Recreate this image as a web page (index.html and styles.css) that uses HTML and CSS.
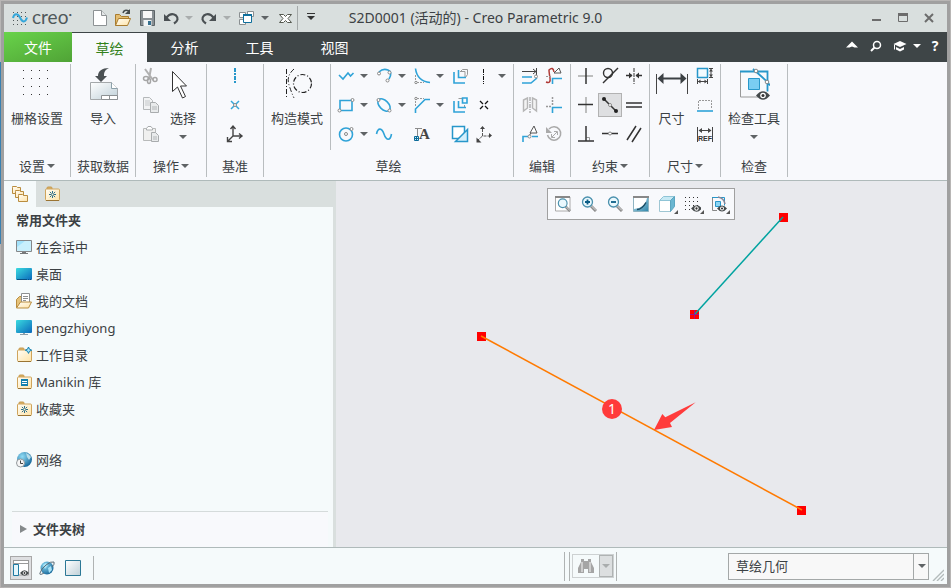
FILE: index.html
```html
<!DOCTYPE html>
<html lang="zh-CN">
<head>
  <meta charset="utf-8">
  <title>S2D0001 (活动的) - Creo Parametric 9.0</title>

  <link rel="stylesheet" href="styles.css">
</head>
<body>

  <svg class="defs" width="0" height="0" aria-hidden="true">
    <defs>
      <linearGradient id="screen" x1="0" y1="0" x2="1" y2="1">
        <stop offset="0" stop-color="#3adbe0"/>
        <stop offset="1" stop-color="#0a68bb"/>
      </linearGradient>
      <linearGradient id="folder" x1="0" y1="0" x2="1" y2="1">
        <stop offset="0" stop-color="#fffdf6"/>
        <stop offset="1" stop-color="#ffe4a8"/>
      </linearGradient>
      <linearGradient id="steel" x1="0" y1="0" x2="1" y2="1">
        <stop offset="0" stop-color="#ffffff"/>
        <stop offset="1" stop-color="#bfd0d8"/>
      </linearGradient>
      <linearGradient id="redraw" x1="0" y1="0" x2="1" y2="1">
        <stop offset="0" stop-color="#bfe4f0"/>
        <stop offset="1" stop-color="#2f86ab"/>
      </linearGradient>
      <radialGradient id="globe" cx=".35" cy=".3" r=".8">
        <stop offset="0" stop-color="#8fdcf5"/>
        <stop offset="1" stop-color="#0c5d92"/>
      </radialGradient>
    </defs>
    <symbol id="eye" viewBox="0 0 14 9">
      <path d="M0 4.5Q7-4 14 4.500Q7 13 0 4.500z" fill="#44494b"/>
      <circle cx="7" cy="4.500" r="2.800" fill="#fff"/>
      <circle cx="7" cy="4.500" r="1.500" fill="#333"/>
    </symbol>
    <symbol id="lens" viewBox="0 0 16 16">
      <path d="M10 10l5 5" stroke="#8c8c8c" stroke-width="3"/>
      <path d="M10.500 10l4.500 4.500" stroke="#dcdcdc" stroke-width="1"/>
      <circle cx="6.500" cy="6" r="5" fill="#eaf8fd" stroke="#4a90ad" stroke-width="1.300"/>
    </symbol>
    <symbol id="folder-shape" viewBox="0 0 16 16">
      <path d="M3 3.500V2q0-1 1-1h3q1 0 1 1v1.500z" fill="#d7b062" stroke="#c79a50"/>
      <rect x="1.500" y="3" width="14" height="11.500" rx="1" fill="url(#folder)" stroke="#cfa45c"/>
      <path d="M2 14.500h13" stroke="#9a7433"/>
    </symbol>
    <symbol id="star" viewBox="0 0 8 8">
      <path d="M4 0v3M4 5v3M0 4h3M5 4h3M1 1l2 2M5 5l2 2M7 1L5 3M3 5L1 7" stroke="#0a5a80" stroke-width="1"/>
    </symbol>
  </svg>

  <div class="window">

    <header class="titlebar">
      <div class="quick">
        <div class="brand">
          <svg width="16" height="14" viewBox="0 0 16 14">
            <path d="M1 1.500h14M1 5.500h14M1 9.500h14M1 13.500h14" stroke="#50585a" stroke-dasharray="1 3"/>
            <path d="M1 7C2 2 6 2 8 6.500s5 6 7 0" fill="none" stroke="#35a7da" stroke-width="2"/>
          </svg>
          <span>creo<sup>•</sup></span>
        </div>
        <button class="tool" aria-label="新建">
          <svg width="24" height="24"><path d="M6.500 4.500h8l5 5v10h-13z" fill="#fff" stroke="#8d9294"/><path d="M14.500 4.500v5h5" fill="#e4e7e8" stroke="#8d9294"/></svg>
        </button>
        <button class="tool" aria-label="打开">
          <svg width="24" height="24"><path d="M4.500 19.500v-11h4l2 2h7v2" fill="#e3bd71" stroke="#a97c2f"/><path d="M4.500 19.500l3-7h12l-3 7z" fill="url(#folder)" stroke="#a97c2f"/><path d="M12 7q1-4 6-2" fill="none" stroke="#454b4d" stroke-width="1.500"/><path d="M19 3v5h-5z" fill="#454b4d"/></svg>
        </button>
        <button class="tool" aria-label="保存">
          <svg width="24" height="24"><path d="M5.500 4.500h14v15h-14z" fill="#899094" stroke="#5d6568"/><path d="M8 5h9v7H8z" fill="#f7f7f7"/><path d="M8.500 14h8v6h-8z" fill="#f1f4f5"/><path d="M13 15h3v4h-3z" fill="#36708e"/></svg>
        </button>
        <div class="split">
          <button class="tool" aria-label="撤消">
            <svg width="24" height="24"><path d="M7 12Q12 6 17 9.500q4 4-2 8" fill="none" stroke="#4a5053" stroke-width="2.200"/><path d="M5 8v7h7z" fill="#4a5053"/></svg>
          </button>
          <button class="drop" aria-label="撤消列表"><i class="caret pale"></i></button>
        </div>
        <div class="split">
          <button class="tool" aria-label="重做">
            <svg width="24" height="24"><path d="M17 12Q12 6 7 9.500q-4 4 2 8" fill="none" stroke="#4a5053" stroke-width="2.200"/><path d="M19 8v7h-7z" fill="#4a5053"/></svg>
          </button>
          <button class="drop" aria-label="重做列表"><i class="caret pale"></i></button>
        </div>
        <div class="split">
          <button class="tool" aria-label="窗口">
            <svg width="24" height="24"><path d="M4.500 6.500h6v5h-6zM12.500 5.500h6v5h-6zM4.500 13.500h6v5h-6z" fill="#fff" stroke="#8a8f91"/><path d="M8.500 8.500h8v8h-8z" fill="#fff" stroke="#0f6f9c"/><path d="M8 9h9" stroke="#0f6f9c" stroke-width="2"/></svg>
          </button>
          <button class="drop" aria-label="窗口列表"><i class="caret"></i></button>
        </div>
        <button class="tool" aria-label="关闭窗口">
          <svg width="24" height="24"><path d="M6.500 8.500h4l2 2 2-2h4l-3.500 4 3.500 4h-4l-2-2-2 2h-4l3.500-4z" fill="#fff" stroke="#54584f"/></svg>
        </button>
        <button class="more" aria-label="自定义快速访问工具栏"><i class="caret dark"></i></button>
      </div>
      <h1>S2D0001 (活动的) - Creo Parametric 9.0</h1>
      <div class="controls">
        <button aria-label="最小化"><svg width="12" height="12"><path d="M1 8h9" stroke="#6c6c6c" stroke-width="2"/></svg></button>
        <button aria-label="最大化"><svg width="12" height="12"><path d="M1.500 2v7.500h9V2z" fill="none" stroke="#6c6c6c"/><path d="M1 2.500h10" stroke="#6c6c6c" stroke-width="3"/></svg></button>
        <button aria-label="关闭"><svg width="12" height="12"><path d="M2 2l8 8M10 2l-8 8" stroke="#6c6c6c" stroke-width="2"/></svg></button>
      </div>
    </header>

    <nav class="tabs">
      <button class="file">文件</button>
      <button class="active">草绘</button>
      <button>分析</button>
      <button>工具</button>
      <button>视图</button>
      <div class="help">
        <button aria-label="最小化功能区"><svg width="14" height="14"><path d="M1 8.500L7 2.500l6 6H9.500L7 7.500 4.500 8.500z" fill="#fff"/></svg></button>
        <button aria-label="搜索"><svg width="14" height="14"><circle cx="8" cy="6" r="3.500" fill="none" stroke="#fff" stroke-width="1.500"/><path d="M5.500 8.500L2 12" stroke="#fff" stroke-width="2"/></svg></button>
        <button aria-label="学习"><svg width="14" height="14"><path d="M7 2l6.500 3L7 8 .5 5zM3 8l4 2 4-2v2.500l-4 2-4-2z" fill="#fff"/><path d="M1.500 5.500v5" stroke="#fff"/></svg></button>
        <button class="drop" aria-label="学习列表"><i class="caret white"></i></button>
        <button class="question" aria-label="帮助">?</button>
      </div>
    </nav>

    <section class="ribbon">

      <div class="group setup">
        <div class="body">
          <button class="big">
            <svg width="32" height="32"><path d="M2 2.500h27M2 10.500h27M2 18.500h27M2 26.500h27" stroke="#333" stroke-dasharray="1 7"/></svg>
            <span>栅格设置</span>
          </button>
        </div>
        <button class="label">设置<i class="caret"></i></button>
      </div>

      <div class="group data">
        <div class="body">
          <button class="big">
            <svg width="32" height="32"><path d="M3.500 14.500h21l6 6v11h-27z" fill="url(#steel)" stroke="#a4a8aa"/><path d="M24.500 14.500v6h6" fill="#fff" stroke="#8ca0aa"/><path d="M14.500 31.500v-4h16v4zM22.500 27.500v4" fill="#fff" stroke="#8c9193"/><path d="M22 0C15 0 11 3 11 8H8l6 6 6-6h-3C17 4 18 2 22 0z" fill="#4b5154"/></svg>
            <span>导入</span>
          </button>
        </div>
        <div class="label">获取数据</div>
      </div>

      <div class="group edit-ops">
        <div class="body">
          <div class="icons">
            <button class="tool" aria-label="剪切" disabled><svg width="24" height="24"><path d="M6 5l8 11M12 4l-2 11" stroke="#b0b0b0" stroke-width="2"/><ellipse cx="7" cy="14.500" rx="2.500" ry="2" fill="none" stroke="#a6a6a6" stroke-width="1.500"/><ellipse cx="10" cy="17" rx="1.500" ry="2.500" fill="none" stroke="#a6a6a6" stroke-width="1.500"/><circle cx="16" cy="15.500" r="2" fill="none" stroke="#a6a6a6" stroke-width="1.500"/></svg></button>
            <button class="tool" aria-label="复制" disabled><svg width="24" height="24"><path d="M4.500 4.500h6l3 3v9h-9z" fill="#f2f3f4" stroke="#b5b8ba"/><path d="M6 8h5M6 10h5M6 12h5" stroke="#c5c8ca"/><path d="M11.500 9.500h5l3 3v7h-8z" fill="#e9ebec" stroke="#a9acae"/><path d="M13 14h5M13 16h5" stroke="#b3b6b8"/></svg></button>
            <button class="tool" aria-label="粘贴" disabled><svg width="24" height="24"><path d="M4.500 6.500h12v12h-12z" fill="#f0f0ef" stroke="#b8baba"/><path d="M7.500 8V6.500L9 4.500h3l1.500 2V8z" fill="#fff" stroke="#a9acae"/><path d="M12.500 10.500h4l3 3v6h-7z" fill="#e9ebec" stroke="#a9acae"/><path d="M14 15h4M14 17h4" stroke="#b3b6b8"/></svg></button>
          </div>
          <button class="big">
            <svg width="32" height="32"><path d="M5.500 3.500v20l5-4.500 5 11 3-1.500-5-10.500h6z" fill="#fff" stroke="#333"/></svg>
            <span>选择</span>
            <i class="caret"></i>
          </button>
        </div>
        <button class="label">操作<i class="caret"></i></button>
      </div>

      <div class="group datum">
        <div class="body">
          <div class="icons">
            <button class="tool" aria-label="中心线"><svg width="24" height="24"><path d="M12 4v16" stroke="#2797ca" stroke-width="2" stroke-dasharray="4 1 2 1"/></svg></button>
            <button class="tool" aria-label="点"><svg width="24" height="24"><path d="M8 8l8 8M16 8l-8 8" stroke="#35a7da" stroke-width="1.500"/><circle cx="12" cy="12" r="1.500" fill="#fff" stroke="#8a8a8a"/></svg></button>
            <button class="tool" aria-label="坐标系"><svg width="24" height="24"><path d="M10 5v9h8M10 14l-5 5M7.500 7L10 4l2.500 3M16 11.500l3 2.500-3 2.500M4.500 15v4.500H9" fill="none" stroke="#444" stroke-width="1.400"/></svg></button>
          </div>
        </div>
        <div class="label">基准</div>
      </div>

      <div class="group sketch">
        <div class="body">
          <button class="big construct">
            <svg width="32" height="32"><path d="M5.500 1v30" stroke="#222" stroke-dasharray="5 2 1 2"/><path d="M13 1q-8 7-5 16t5 13" fill="none" stroke="#222" stroke-dasharray="5 2 1 2"/><circle cx="21.500" cy="15.500" r="9" fill="none" stroke="#222" stroke-width="1.200" stroke-dasharray="5 2 1 2"/></svg>
            <span>构造模式</span>
          </button>
          <div class="sketch-grid">
            <div class="split">
              <button class="tool" aria-label="线"><svg width="24" height="24"><path d="M5 11l4 4 5-6 2.500 3L19.500 9" class="blue"/></svg></button>
              <button class="drop" aria-label="线类型"><i class="caret"></i></button>
            </div>
            <div class="split">
              <button class="tool" aria-label="弧"><svg width="24" height="24"><path d="M7 8Q11 4 16 6t1 9" class="blue"/><g class="knob"><circle cx="7" cy="9.500" r="1.500"/><circle cx="17.500" cy="8.500" r="1.500"/><circle cx="15.500" cy="16.500" r="1.500"/></g></svg></button>
              <button class="drop" aria-label="弧类型"><i class="caret"></i></button>
            </div>
            <div class="split">
              <button class="tool" aria-label="圆角"><svg width="24" height="24"><path d="M5.500 11v7.500H14" class="dash"/><path d="M5.500 4.500Q7 17 20 18.500" class="blue"/><g class="knob"><circle cx="6" cy="18.500" r="1.200"/></g></svg></button>
              <button class="drop" aria-label="圆角类型"><i class="caret"></i></button>
            </div>
            <button class="tool" aria-label="偏移"><svg width="24" height="24"><path d="M12 7.500h5v6M12.500 7.500l2-2h5v5l-2 3" fill="none" stroke="#999"/><path d="M6 8v11h11M10.500 6v7.500H18" class="blue"/></svg></button>
            <div class="split">
              <button class="tool" aria-label="构造中心线"><svg width="24" height="24"><path d="M11.500 5v15" stroke="#111" stroke-dasharray="4 1 1 1"/></svg></button>
              <button class="drop" aria-label="中心线类型"><i class="caret"></i></button>
            </div>

            <div class="split">
              <button class="tool" aria-label="矩形"><svg width="24" height="24"><path d="M6 7.500h12v10H6z" class="blue"/><g class="knob"><circle cx="18.500" cy="7" r="1.500"/><circle cx="5.500" cy="17.500" r="1.500"/></g></svg></button>
              <button class="drop" aria-label="矩形类型"><i class="caret"></i></button>
            </div>
            <div class="split">
              <button class="tool" aria-label="椭圆"><svg width="24" height="24"><ellipse cx="12" cy="12" rx="7.500" ry="4.500" transform="rotate(45 12 12)" class="blue"/><g class="knob"><circle cx="6.500" cy="7" r="1.500"/><circle cx="17.500" cy="17.500" r="1.500"/></g></svg></button>
              <button class="drop" aria-label="椭圆类型"><i class="caret"></i></button>
            </div>
            <div class="split">
              <button class="tool" aria-label="倒角"><svg width="24" height="24"><path d="M5.500 13V5.500H14" class="dash"/><path d="M5.500 20v-4L15 6.500h5" class="blue"/><g class="knob"><circle cx="6" cy="5.500" r="1.200"/></g></svg></button>
              <button class="drop" aria-label="倒角类型"><i class="caret"></i></button>
            </div>
            <button class="tool" aria-label="加厚"><svg width="24" height="24"><path d="M10.500 5.500h4M16.500 12v2" fill="none" stroke="#999"/><path d="M6 8v11h11M10.500 8v6.500H18M14.500 5v5H19V5z" class="blue"/></svg></button>
            <button class="tool" aria-label="构造点"><svg width="24" height="24"><path d="M8 8l3 3M16 8l-3 3M8 16l3-3M16 16l-3-3" stroke="#111" stroke-width="1.300"/></svg></button>

            <div class="split">
              <button class="tool" aria-label="圆"><svg width="24" height="24"><circle cx="12" cy="12.500" r="6.500" class="blue"/><g class="knob"><circle cx="12" cy="12" r="1.500"/><circle cx="17.500" cy="7" r="1.500"/></g></svg></button>
              <button class="drop" aria-label="圆类型"><i class="caret"></i></button>
            </div>
            <button class="tool" aria-label="样条"><svg width="24" height="24"><path d="M4.500 12C6 5 10 6 12 12s6 8 7.500 0" class="blue"/></svg></button>
            <button class="tool" aria-label="文本"><svg width="24" height="24"><path d="M5 6.500h7M7.500 6.500V14" stroke="#8b8b8b"/><text x="9" y="17" class="serif-a">A</text><path d="M4.500 14.500h4v4h-4zM6.500 14v5M4 16.500h5" fill="#c9effc" stroke="#0c6b99"/></svg></button>
            <button class="tool" aria-label="投影"><svg width="24" height="24"><path d="M4.500 4.500h12v12h-12z" fill="#fff" stroke="#2797ca" stroke-width="1.500"/><path d="M7.500 19.500l12-12v12z" fill="#d3effb" stroke="#2797ca" stroke-width="1.500"/></svg></button>
            <button class="tool" aria-label="构造坐标系"><svg width="24" height="24"><path d="M10.500 7v7H17M10.500 14L6 18" fill="none" stroke="#555" stroke-dasharray="3 1"/><path d="M8 7l2.500-3L13 7zM17 11v5l3-2.500zM4.500 15.500v5h5z" fill="#444"/></svg></button>
          </div>
        </div>
        <div class="label">草绘</div>
      </div>

      <div class="group edit">
        <div class="body">
          <div class="icons two">
            <button class="tool" aria-label="修改"><svg width="24" height="24"><path d="M4 7.500h14M18.500 4v7M15 5l3 2.500-3 2.500" fill="none" stroke="#444"/><path d="M4 13h10M4 19h9l6-5" class="blue"/><g class="knob"><circle cx="18" cy="12.500" r="1.500"/></g></svg></button>
            <button class="tool" aria-label="删除段"><svg width="24" height="24"><path d="M4 18q5 2 4-4t-1-8q4-4 5 2" fill="none" stroke="#b03a36" stroke-width="1.500"/><path d="M19 9l-2-5-5 5z" fill="#fff" stroke="#555"/><path d="M4 12.500h6" stroke="#999" stroke-dasharray="2 1"/><path d="M10.500 20v-5.500H20" class="blue"/></svg></button>
            <button class="tool" aria-label="镜像" disabled><svg width="24" height="24"><path d="M5.500 7v11l4-3V5zM18.500 7v11l-4-3V5z" fill="#f3f3f3" stroke="#b6b6b6" stroke-width="1.400"/><path d="M12 4v16" stroke="#8b8b8b" stroke-dasharray="4 1 1 1"/></svg></button>
            <button class="tool" aria-label="拐角"><svg width="24" height="24"><path d="M4 13.500h6M10.500 4v9" stroke="#999" stroke-width="1.500" stroke-dasharray="2 1"/><path d="M10.500 20v-5.500H20" class="blue"/></svg></button>
            <button class="tool" aria-label="分割"><svg width="24" height="24"><path d="M5 20v-5.500h5M14 14.500h6" class="blue"/><path d="M12 11l4-7 3 7zM11 14l2-3" fill="#fff" stroke="#555"/><g class="knob"><circle cx="11.500" cy="14.500" r="1.500"/></g></svg></button>
            <button class="tool" aria-label="旋转调整大小" disabled><svg width="24" height="24"><path d="M7 7A6.700 6.700 0 1 1 5.500 13" fill="none" stroke="#aaa" stroke-width="1.500"/><path d="M4 5v6h6z" fill="#aaa"/><path d="M10 15l5-5M12 9.500h3.500V13M9.500 12v3.500H13" fill="none" stroke="#aaa"/></svg></button>
          </div>
        </div>
        <div class="label">编辑</div>
      </div>

      <div class="group constrain">
        <div class="body">
          <div class="icons three">
            <button class="tool" aria-label="竖直"><svg width="24" height="24"><path d="M4 12h15" stroke="#aaa" stroke-width="1.500"/><path d="M12 4v16" stroke="#333" stroke-width="1.500"/></svg></button>
            <button class="tool" aria-label="相切"><svg width="24" height="24"><circle cx="10" cy="9" r="4.500" fill="none" stroke="#333" stroke-width="1.400"/><path d="M5 19L20 4" stroke="#333" stroke-width="1.400"/></svg></button>
            <button class="tool" aria-label="对称"><svg width="24" height="24"><path d="M12 4v16" stroke="#333" stroke-dasharray="4 1"/><path d="M4 11.500h6M20 11.500h-6" stroke="#333" stroke-width="1.400"/><path d="M7 8.500l3.500 3L7 14.500zM17 8.500l-3.500 3 3.500 3z" fill="#333"/></svg></button>
            <button class="tool" aria-label="水平"><svg width="24" height="24"><path d="M12 4v16" stroke="#aaa" stroke-width="1.500"/><path d="M4 11.500h15" stroke="#333" stroke-width="1.500"/></svg></button>
            <button class="tool pressed" aria-label="中点"><svg width="24" height="24"><path d="M6 6l12 12" stroke="#333" stroke-width="1.500"/><circle cx="6" cy="6" r="2" fill="#222"/><circle cx="18" cy="18" r="2" fill="#222"/><g class="knob"><circle cx="12" cy="12" r="1.500"/></g></svg></button>
            <button class="tool" aria-label="相等"><svg width="24" height="24"><path d="M4 10h16M4 14h16" stroke="#333" stroke-width="1.500"/></svg></button>
            <button class="tool" aria-label="垂直"><svg width="24" height="24"><path d="M12.500 15.500h3v3" fill="none" stroke="#999"/><path d="M12 4v15M4 19h16" stroke="#333" stroke-width="1.500"/></svg></button>
            <button class="tool" aria-label="重合"><svg width="24" height="24"><path d="M4 11.500h16" stroke="#333" stroke-width="1.500"/><g class="knob"><circle cx="12" cy="11.500" r="1.500"/></g></svg></button>
            <button class="tool" aria-label="平行"><svg width="24" height="24"><path d="M5 18L14 4M10 20L19 6" stroke="#333" stroke-width="1.500"/></svg></button>
          </div>
        </div>
        <button class="label">约束<i class="caret"></i></button>
      </div>

      <div class="group dimension">
        <div class="body">
          <button class="big">
            <svg width="32" height="32"><path d="M.5 6v20M31.500 6v20" stroke="#444"/><path d="M5 10.500h22" stroke="#3c4144" stroke-width="2"/><path d="M1.500 10.500l6-5.500v11zM30.500 10.500l-6-5.500v11z" fill="#3c4144"/></svg>
            <span>尺寸</span>
          </button>
          <div class="icons">
            <button class="tool" aria-label="周长"><svg width="24" height="24"><path d="M4.500 4.500h10v9h-10z" fill="#f3fbff" stroke="#2797ca" stroke-width="1.500"/><path d="M16 4.500h4M16 13.500h4M18 5v8M4.500 15v5M14.500 15v5M5 17.500h9" fill="none" stroke="#444"/><path d="M16 7.500h4L18 5zM16 10.500h4L18 13zM7.500 15.500v4L5 17.500zM11.500 15.500v4l2.500-2z" fill="#444"/></svg></button>
            <button class="tool" aria-label="基线"><svg width="24" height="24"><path d="M5.500 16V7.500h13V16" class="dash"/><path d="M4 18h16" class="blue"/></svg></button>
            <button class="tool" aria-label="参考"><svg width="24" height="24"><path d="M4.500 5v15M19.500 5v15M6 8.500h12" fill="none" stroke="#444"/><path d="M9 6v5L5.500 8.500zM15 6v5l3.500-2.500z" fill="#444"/><text x="5" y="19" class="ref">REF</text></svg></button>
          </div>
        </div>
        <button class="label">尺寸<i class="caret"></i></button>
      </div>

      <div class="group inspect">
        <div class="body">
          <button class="big">
            <svg width="32" height="32"><path d="M2.500 3v26H20" fill="none" stroke="#999"/><path d="M2 3.500h27.500v20M15 1l14 12.500 3 4" fill="none" stroke="#2797ca" stroke-width="1.800"/><path d="M10.500 10.500h11v11h-11z" fill="#79cdf2" stroke="#2797ca"/><g class="knob"><circle cx="18" cy="3" r="1.800"/><circle cx="29" cy="14" r="1.800"/></g><use href="#eye" x="18" y="23" width="14" height="9"/></svg>
            <span>检查工具</span>
            <i class="caret"></i>
          </button>
        </div>
        <div class="label">检查</div>
      </div>

    </section>

    <main class="work">

      <aside class="navigator">
        <div class="nav-tabs">
          <button class="active" aria-label="文件夹浏览器">
            <svg width="18" height="18"><path d="M1.500 2.500v-1h4l1 1h3v6h-8z" fill="url(#folder)" stroke="#b98d3f"/><path d="M4.500 6.500v-1h4l1 1h3v6h-8z" fill="url(#folder)" stroke="#b98d3f"/><path d="M7.500 10.500v-1h4l1 1h4v6h-9z" fill="url(#folder)" stroke="#b98d3f"/></svg>
          </button>
          <button aria-label="收藏夹">
            <svg width="16" height="16"><use href="#folder-shape" width="16" height="16"/><use href="#star" x="5" y="5" width="7" height="7"/></svg>
          </button>
        </div>
        <div class="places">
          <h2>常用文件夹</h2>
          <ul>
            <li><a href="#"><svg width="16" height="16"><path d="M.5 1.500h15v11H.5z" fill="#a2e2fb" stroke="#858789"/><path d="M1 12V8L9 2h6v10z" fill="#c8effc"/><path d="M6 13h4v1h2v1H4v-1h2z" fill="#77797b"/></svg>在会话中</a></li>
            <li><a href="#"><svg width="16" height="16"><rect y="2" width="16" height="12" rx="1" fill="url(#screen)"/><path d="M1 13.500h14" stroke="#084f82" stroke-dasharray="10 1 1 1"/></svg>桌面</a></li>
            <li><a href="#"><svg width="16" height="16"><path d="M.5 14.500v-8l3-3h3v6z" fill="#e6c37a" stroke="#b98d3f"/><path d="M5.500.5h8v10h-8z" fill="#fff" stroke="#8c8f91"/><path d="M7 3.500h5M7 5.500h5M7 7.500h3" stroke="#8c8f91"/><path d="M.5 15l4-6h11l-3 6z" fill="url(#folder)" stroke="#b98d3f"/></svg>我的文档</a></li>
            <li><a href="#"><svg width="16" height="16"><rect width="16" height="13" rx="1" fill="url(#screen)"/><path d="M7 13h2v1h3v1H4v-1h3z" fill="#8ea0ab"/></svg>pengzhiyong</a></li>
            <li><a href="#"><svg width="16" height="16"><use href="#folder-shape" width="16" height="16"/><path d="M12.500 0l1 2.200 2.200 1-2.200 1-1 2.200-1-2.200-2.200-1 2.200-1z" fill="#a9e3f7" stroke="#0e7fb2"/></svg>工作目录</a></li>
            <li><a href="#"><svg width="16" height="16"><use href="#folder-shape" width="16" height="16"/><path d="M5 5h7v7H5z" fill="#1480ad"/><path d="M6 7.500h5M6 9.500h5" stroke="#fff"/></svg>Manikin 库</a></li>
            <li><a href="#"><svg width="16" height="16"><use href="#folder-shape" width="16" height="16"/><use href="#star" x="5" y="5" width="7" height="7"/></svg>收藏夹</a></li>
            <li class="network"><a href="#"><svg width="16" height="16"><circle cx="8.500" cy="7.500" r="7.500" fill="url(#globe)"/><path d="M10 1q3 1 5 4l-2 3-2-3z" fill="#b8dde9"/><circle cx="4.500" cy="11" r="4" fill="#f6f6f6" stroke="#93999c"/><path d="M4.500 8.500v3H7" fill="none" stroke="#444"/></svg>网络</a></li>
          </ul>
        </div>
        <button class="tree"><i></i>文件夹树</button>
      </aside>

      <div class="canvas">
        <svg class="drawing" width="611" height="366">
          <g fill="#f00">
            <path d="M443 32h9v9h-9zM354 129h9v9h-9zM141 151h9v9h-9zM461 325h9v9h-9z"/>
          </g>
          <path d="M358.500 129v9M354 133.500h9" stroke="#a0108a"/>
          <path d="M447 36L359 133" stroke="#00a3a0" stroke-width="1.500"/>
          <path d="M145 155L466 329" stroke="#ff7a00" stroke-width="1.500"/>
          <path d="M318 249l8.300-16 3 3.300L359.700 221.300 334 242l2 4z" fill="#ff3b3b"/>
          <circle cx="276" cy="228" r="10" fill="#ff3b3b"/>
          <text x="276" y="233">1</text>
        </svg>
        <div class="view-bar">
          <button aria-label="重新调整"><svg width="16" height="16"><path d="M.5 1v14H15V1" fill="#fff" stroke="#aaa"/><path d="M0 1h15" stroke="#888" stroke-width="2"/><use href="#lens" x="2" y="2" width="14" height="14"/></svg></button>
          <button aria-label="放大"><svg width="16" height="16"><use href="#lens" width="16" height="16"/><path d="M4 6h5M6.500 3.500v5" stroke="#0b5d86" stroke-width="1.800"/></svg></button>
          <button aria-label="缩小"><svg width="16" height="16"><use href="#lens" width="16" height="16"/><path d="M4 6h5" stroke="#0b5d86" stroke-width="1.800"/></svg></button>
          <button aria-label="重画"><svg width="16" height="16"><path d="M.5 1v14.500h15V1z" fill="url(#redraw)" stroke="#8fb4c2"/><path d="M1 2h13Q13 9 6 12l-5 1z" fill="#fff"/><path d="M0 1h16" stroke="#888" stroke-width="2"/><path d="M4 13.500q5 0 9-7" fill="none" stroke="#1c4b62" stroke-width="1.500"/></svg></button>
          <button class="menu" aria-label="显示样式"><svg width="16" height="16"><path d="M.5 4.500h11v11H.5z" fill="#fff" stroke="#9fc6d3"/><path d="M.5 4.500l4-4h11l-4 4z" fill="#c6e9f4" stroke="#8fc4d6"/><path d="M11.500 4.500l4-4v10l-4 5z" fill="#69b6d1" stroke="#5aa5c0"/></svg></button>
          <button class="menu" aria-label="栅格显示"><svg width="16" height="16"><path d="M0 1.500h16M0 5.500h16M0 9.500h16M0 13.500h6" stroke="#333" stroke-dasharray="1 3"/><use href="#eye" x="6" y="9" width="11" height="7"/></svg></button>
          <button class="menu" aria-label="草绘器显示"><svg width="16" height="16"><path d="M1.500 1v13.500H6" fill="none" stroke="#888"/><path d="M1 1.500h12.500v8" fill="none" stroke="#2797ca"/><path d="M4.500 5.500h5v5h-5z" fill="#8cd4f3" stroke="#2797ca"/><path d="M7 1q6 1 7 7" fill="none" stroke="#889" stroke-width="1.500"/><use href="#eye" x="6" y="9" width="10" height="7"/></svg></button>
        </div>
      </div>

    </main>

    <footer class="status">
      <button class="toggle" aria-label="导航器"><svg width="16" height="16"><path d="M.5 1v14H15.500V1" fill="#fff" stroke="#999"/><path d="M0 .5h16M0 3.500h16" stroke="#999"/><path d="M.5 4.500h5v11h-5z" fill="#e5f6fc" stroke="#207ba3"/><use href="#eye" x="7" y="10" width="9" height="6"/></svg></button>
      <button class="tool" aria-label="浏览器"><svg width="18" height="18"><circle cx="9" cy="9" r="6.500" fill="url(#globe)"/><path d="M5 6l3-2 2 2-3 4zM10 9l3-2 1 4-3 3z" fill="#a8e2f5"/><path d="M6 14q-5 3-4 0 1-4 6-8t8-3q1 2-2 5" fill="none" stroke="#5d6d77"/></svg></button>
      <button class="tool" aria-label="全屏"><svg width="16" height="16"><path d="M.5.5h15v15H.5z" fill="url(#steel)" stroke="#2c7896"/></svg></button>
      <span class="bar"></span>
      <div class="find">
        <div class="find-box">
          <button aria-label="查找" disabled><svg width="16" height="16"><path d="M3 1h3v2h4V1h3v3l3 6v5h-6v-4H6v4H0v-5l3-6z" fill="#a5a5a5"/><path d="M4 4v10M12 4v10" stroke="#cecece" stroke-width="2"/></svg></button>
          <button class="find-drop" aria-label="查找选项" disabled><i class="caret pale"></i></button>
        </div>
      </div>
      <label class="filter">
        <select aria-label="选择过滤器">
          <option>草绘几何</option>
        </select>
        <span><i class="caret"></i></span>
      </label>
      <svg class="grip" width="12" height="12"><path d="M1 12L12 1M5 12l7-7M9 12l3-3" stroke="#b3bbbb" stroke-width="1.400"/></svg>
    </footer>

  </div>

</body>
</html>
```
FILE: styles.css
```css
* {
  box-sizing: border-box;
}

html, body {
  height: 100%;
  margin: 0;
}

body {
  padding: 1px;
  background: #b8b6b5 linear-gradient(#b8b6b5 62px, #3a80b0 62px, #3a80b0 244px, #b5b1b1 244px) left / 4px no-repeat;
  font: 13px/20px "Noto Sans", "Noto Sans CJK SC", sans-serif;
  color: #3c4144;
}

button {
  display: flex;
  align-items: center;
  justify-content: center;
  margin: 0;
  padding: 0;
  border: 0;
  background: none;
  font: inherit;
  color: inherit;
}

svg {
  display: block;
  flex: none;
}

h1, h2, ul {
  margin: 0;
  padding: 0;
}

.defs {
  position: absolute;
}

.window {
  display: flex;
  flex-direction: column;
  height: 100%;
  border: 3px solid #a0a0a0;
  background: #f5fafb;
}

.blue {
  fill: none;
  stroke: #2fa3d8;
  stroke-width: 1.6;
}

.dash {
  fill: none;
  stroke: #999;
  stroke-dasharray: 2 1;
}

.knob {
  fill: #fff;
  stroke: #888;
}

.caret {
  border: 4px solid transparent;
  border-top-color: #5f6365;
  border-bottom: 0;
}

.caret.pale {
  border-top-color: #a9adad;
}

.caret.white {
  border-top-color: #fff;
}

.tool {
  width: 24px;
  height: 24px;
}

.drop {
  width: 12px;
  height: 24px;
}

.split {
  display: flex;
}

/* title bar */

.titlebar {
  display: grid;
  grid-template-columns: 1fr auto 1fr;
  align-items: center;
  height: 28px;
  flex: none;
  background: #d9dfde;
}

.titlebar h1 {
  font-size: 14px;
  font-weight: normal;
  white-space: nowrap;
}

.quick {
  display: flex;
  align-items: center;
}

.quick .split {
  margin-right: 2px;
}

.brand {
  display: flex;
  align-items: center;
  gap: 4px;
  width: 83px;
  padding-left: 8px;
  font: 19px/20px Lato, sans-serif;
  color: #50585a;
}

.brand span {
  padding-bottom: 2px;
}

.brand sup {
  font-size: 6px;
  line-height: 8px;
}

.more {
  width: 26px;
  height: 24px;
  border-left: 1px solid #a4a9a9;
}

.caret.dark {
  position: relative;
  border-top-color: #333;
}

.caret.dark::before {
  content: '';
  position: absolute;
  top: -7px;
  left: -4px;
  width: 8px;
  height: 1px;
  background: #333;
}

.controls {
  display: flex;
  justify-content: flex-end;
  gap: 14px;
  padding-right: 12px;
}

/* tabs */

.tabs {
  display: flex;
  height: 30px;
  flex: none;
  background: #3e4547;
  font-size: 14px;
  color: #fff;
}

.tabs > button {
  width: 75px;
  padding-top: 2px;
}

.tabs .file {
  width: 68px;
  background: linear-gradient(160deg, #68d34a, #50a336);
}

.tabs .active {
  margin-top: 1px;
  background: #f8f9fc;
  color: #33811a;
}

.help {
  display: flex;
  align-items: center;
  gap: 10px;
  margin-left: auto;
  padding: 0 6px 3px 0;
}

.help .drop {
  margin: 0 -4px 0 -6px;
}

.help .question {
  width: 12px;
  font-weight: bold;
}

/* ribbon */

.ribbon {
  display: flex;
  flex: none;
  padding: 2px 0 3px;
  border-bottom: 1px solid #afbaba;
  background: #f8f9fc;
}

.group {
  display: flex;
  flex-direction: column;
  border-right: 1px solid #b9bdbf;
}

.group .body {
  display: flex;
  height: 90px;
}

.label {
  display: flex;
  align-items: center;
  justify-content: center;
  gap: 2px;
  height: 23px;
}

.big {
  display: flex;
  flex: 1;
  flex-direction: column;
  align-items: center;
  justify-content: flex-start;
  padding-top: 4px;
  white-space: nowrap;
}

.big span {
  margin-top: 8px;
}

.big .caret {
  margin-top: 7px;
}

.icons {
  display: grid;
  grid-template-columns: 24px;
  grid-auto-rows: 24px;
  row-gap: 5px;
}

.icons.two {
  grid-template-columns: 24px 24px;
}

.icons.three {
  grid-template-columns: 24px 24px 24px;
}

.setup,
.inspect {
  width: 67px;
}

.data {
  width: 65px;
}

.edit-ops,
.dimension {
  width: 71px;
}

.edit-ops .body,
.constrain .body {
  padding: 0 3px;
}

.datum,
.edit {
  width: 57px;
}

.datum .body,
.edit .body {
  justify-content: center;
}

.constrain {
  width: 79px;
}

.dimension .body {
  padding-right: 3px;
}

.construct {
  flex: none;
  width: 66px;
}

.sketch-grid {
  display: grid;
  grid-template-columns: 38px 38px 38px 24px 36px;
  grid-auto-rows: 24px;
  row-gap: 5px;
  height: 86px;
  padding: 0 5px 0 3px;
  border-left: 1px solid #b9bdbf;
}

.pressed {
  border: 1px solid #b2b2b2;
  background: #dedfe1;
}

.serif-a {
  font: bold 15px "Liberation Serif", serif;
  fill: #444;
}

.ref {
  font: bold 7px "Liberation Sans", sans-serif;
  fill: #333;
}

/* navigator */

.work {
  display: flex;
  flex: 1;
  min-height: 0;
}

.navigator {
  display: flex;
  flex-direction: column;
  width: 332px;
  border-right: 3px solid #d9dfde;
}

.nav-tabs {
  display: flex;
  height: 26px;
  background: #d9dfde;
}

.nav-tabs button {
  width: 32px;
}

.nav-tabs .active {
  background: #f5fafb;
}

.places {
  flex: 1;
  padding-left: 12px;
}

.places h2 {
  font-size: 13px;
  line-height: 26px;
}

.places ul {
  list-style: none;
}

.places a {
  display: flex;
  align-items: center;
  gap: 4px;
  height: 27px;
  color: inherit;
  text-decoration: none;
}

.places .network {
  margin-top: 24px;
}

.tree {
  justify-content: flex-start;
  gap: 6px;
  height: 36px;
  margin: 0 5px 0 8px;
  padding: 0 0 2px 8px;
  border-top: 1px solid #d5dbdb;
  background: #f8f9fc;
  font-weight: bold;
}

.tree i {
  border: 4px solid transparent;
  border-left: 7px solid #85898b;
  border-right: 0;
}

/* graphics area */

.canvas {
  position: relative;
  flex: 1;
  overflow: hidden;
  background: #e8e9ed;
}

.drawing {
  position: absolute;
  top: 0;
  left: 0;
}

.drawing text {
  font: 14px "Noto Sans", sans-serif;
  text-anchor: middle;
  fill: #fff;
}

.view-bar {
  position: absolute;
  top: 7px;
  right: 1px;
  left: 0;
  display: flex;
  gap: 2px;
  width: max-content;
  margin: 0 auto;
  padding: 3px;
  border: 1px solid #a0a0a0;
  background: #f8f9fc;
}

.view-bar button {
  position: relative;
  width: 24px;
  height: 24px;
}

.view-bar .menu::after {
  content: '';
  position: absolute;
  right: 1px;
  bottom: 2px;
  border: 2px solid #555;
  border-top-color: transparent;
  border-left-color: transparent;
}

/* status bar */

.status {
  display: flex;
  align-items: center;
  height: 37px;
  flex: none;
  padding-left: 6px;
  border-top: 1px solid #afbaba;
}

.status > button,
.bar {
  margin-top: 3px;
}

.toggle {
  width: 22px;
  height: 24px;
  border: 1px solid #a8a8a8;
  background: #dedfe1;
}

.status .tool {
  margin-left: 2px;
}

.status .toggle + .tool {
  margin-left: 3px;
}

.bar {
  height: 24px;
  margin-left: 8px;
  border-left: 1px solid #afb3b3;
}

.find {
  display: flex;
  align-items: center;
  height: 29px;
  margin-left: auto;
  padding: 0 2px;
  border: solid #afb3b3;
  border-width: 0 1px;
}

.find::before {
  content: '';
  height: 29px;
  margin: 0 2px;
  border-left: 1px solid #afb3b3;
}

.find-box {
  display: flex;
  height: 24px;
  border: 1px solid #cdd1d2;
}

.find-box button {
  width: 26px;
}

.find-box .find-drop {
  width: 14px;
  border: 1px solid #afb3b3;
  background: #dcdfe0;
}

.filter {
  position: relative;
  width: 201px;
  margin-left: 111px;
}

.filter select {
  width: 100%;
  height: 27px;
  padding: 0 22px 0 7px;
  border: 1px solid #a4a8a8;
  border-radius: 0;
  background: #f8f8f8;
  font: inherit;
  color: inherit;
  appearance: none;
}

.filter span {
  position: absolute;
  top: 0;
  right: 0;
  display: flex;
  align-items: center;
  justify-content: center;
  width: 16px;
  height: 27px;
  border-left: 1px solid #a4a8a8;
  pointer-events: none;
}

.grip {
  align-self: flex-end;
  margin: 0 3px 3px;
}
```
